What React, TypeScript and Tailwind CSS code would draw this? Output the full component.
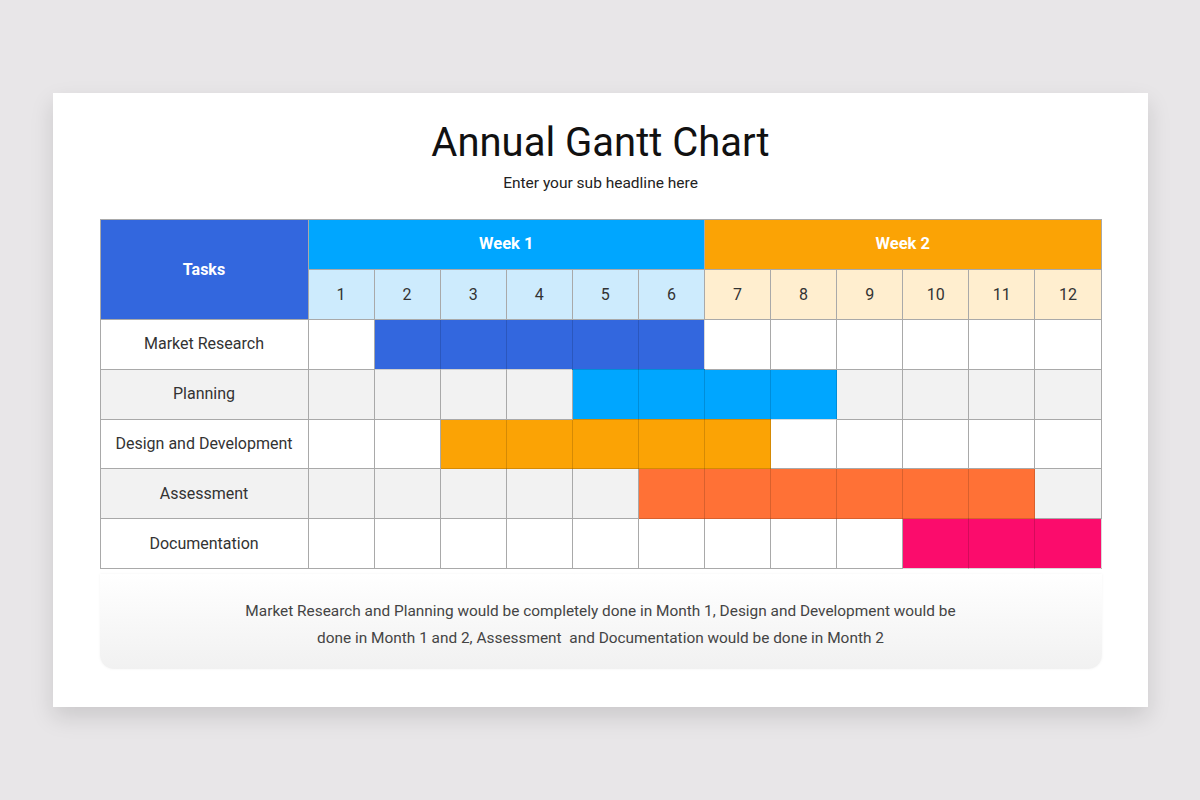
import React from "react";

type Task = { name: string; start: number; end: number; color: string };

const TASKS: Task[] = [
  { name: "Market Research", start: 2, end: 6, color: "bg-[#3367de]" },
  { name: "Planning", start: 5, end: 8, color: "bg-[#00a6ff]" },
  { name: "Design and Development", start: 3, end: 7, color: "bg-[#fba305]" },
  { name: "Assessment", start: 6, end: 11, color: "bg-[#ff7136]" },
  { name: "Documentation", start: 10, end: 12, color: "bg-[#fb0c6c]" },
];

const DAYS = Array.from({ length: 12 }, (_, i) => i + 1);

export default function App() {
  return (
    <div
      className="min-h-[800px] w-full bg-[#e8e6e8] pt-[93px]"
      style={{ fontFamily: "Roboto, 'Liberation Sans', sans-serif" }}
    >
      <div className="ml-[53px] w-[1095px] h-[614px] bg-white shadow-[0_10px_22px_rgba(0,0,0,0.13)] flex flex-col items-center pt-[26px]">
        <h1 className="text-[40px] leading-[48px] text-[#111] font-normal">Annual Gantt Chart</h1>
        <p className="mt-[6px] text-[15.5px] leading-[20px] text-[#222]">Enter your sub headline here</p>

        <div className="mt-[26px] w-[1002px]">
          <table className="w-full border-collapse table-fixed text-[16px]">
            <colgroup>
              <col className="w-[208px]" />
              {DAYS.map((d) => (
                <col key={d} />
              ))}
            </colgroup>
            <thead>
              <tr className="h-[50px]">
                <th
                  rowSpan={2}
                  className="bg-[#3367de] border border-[#a9a9a9] text-white font-bold text-[16px]"
                >
                  Tasks
                </th>
                <th colSpan={6} className="bg-[#00a6ff] border border-[#a9a9a9] text-white font-bold text-[16.5px]">
                  Week 1
                </th>
                <th colSpan={6} className="bg-[#fba305] border border-[#a9a9a9] text-white font-bold text-[16.5px]">
                  Week 2
                </th>
              </tr>
              <tr className="h-[50px]">
                {DAYS.map((d) => (
                  <th
                    key={d}
                    className={`border border-[#a9a9a9] font-normal text-[#333] ${
                      d <= 6 ? "bg-[#cdebfd]" : "bg-[#ffeecf]"
                    }`}
                  >
                    {d}
                  </th>
                ))}
              </tr>
            </thead>
            <tbody>
              {TASKS.map((t, i) => {
                const rowBg = i % 2 === 1 ? "bg-[#f2f2f2]" : "bg-white";
                return (
                  <tr key={t.name} className="h-[49.8px]">
                    <td className={`border border-[#a9a9a9] text-center text-[#333] ${rowBg}`}>{t.name}</td>
                    {DAYS.map((d) => {
                      const on = d >= t.start && d <= t.end;
                      return (
                        <td
                          key={d}
                          className={`border ${on ? `${t.color} border-black/15` : `${rowBg} border-[#a9a9a9]`}`}
                        />
                      );
                    })}
                  </tr>
                );
              })}
            </tbody>
          </table>

          <div className="mt-[5px] h-[95px] pt-[8px] rounded-b-[14px] bg-gradient-to-b from-white to-[#f1f1f1] shadow-[0_0_3px_rgba(0,0,0,0.05)] flex items-center justify-center">
            <p className="text-center text-[15.4px] leading-[27px] text-[#444]">
              Market Research and Planning would be completely done in Month 1, Design and Development would be
              <br />
              done in Month 1 and 2, Assessment &nbsp;and Documentation would be done in Month 2
            </p>
          </div>
        </div>
      </div>
    </div>
  );
}
